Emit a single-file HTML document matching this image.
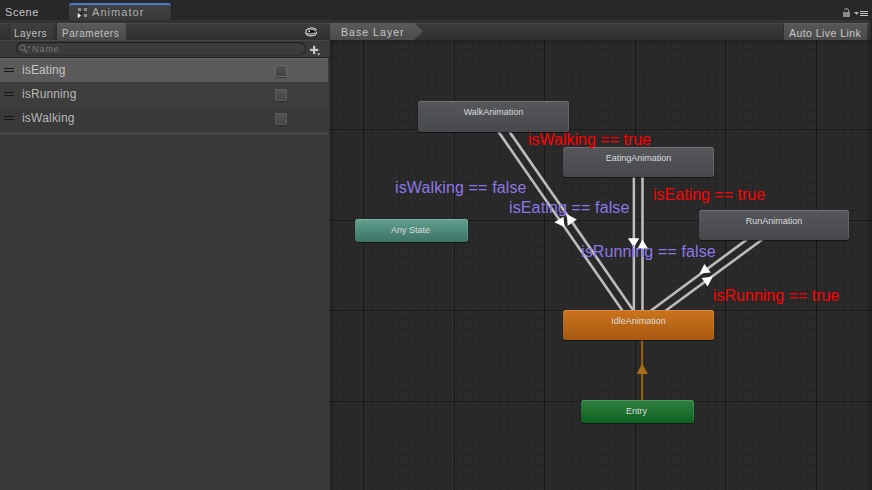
<!DOCTYPE html>
<html><head><meta charset="utf-8">
<style>
*{margin:0;padding:0;box-sizing:border-box}
html,body{width:872px;height:490px;overflow:hidden;background:#282828;font-family:"Liberation Sans",sans-serif}
.abs{position:absolute}
.ui{position:absolute;color:#c2c2c2;font-size:11px;white-space:pre;letter-spacing:0.5px;line-height:13px}
.node{position:absolute;border-radius:3px;color:#dcdcdc;font-size:9px;text-align:center;white-space:pre;box-shadow:inset 0 1px 0 rgba(255,255,255,.16),inset -1px 0 0 rgba(255,255,255,.12),0 1px 1px rgba(0,0,0,.55)}
.gray{background:linear-gradient(#55575b,#46484b);width:151px;height:31px;line-height:22px}
.lbl{position:absolute;font-size:16px;white-space:pre;line-height:18px}
.red{color:#ff0000}
.pur{color:#8c78e8;letter-spacing:0.13px}
</style></head><body>
<!-- top tab strip -->
<div class="abs" style="left:0;top:0;width:872px;height:20px;background:#282828"></div>
<div class="ui" style="left:5px;top:6px;letter-spacing:0.55px;color:#c4c4c4">Scene</div>
<div class="abs" style="left:69px;top:3px;width:102px;height:17px;background:linear-gradient(#404040,#3a3a3a);border-top:2px solid #4a7cc8;border-radius:3px 3px 0 0;box-shadow:1px 0 0 #222"></div>
<svg class="abs" style="left:76px;top:6px" width="14" height="14" viewBox="0 0 14 14">
 <rect x="1" y="1" width="5" height="5" fill="#222"/><rect x="1.7" y="1.7" width="3.6" height="3.6" fill="#8a8a8a"/>
 <rect x="7" y="1" width="5" height="5" fill="#222"/><rect x="7.7" y="1.7" width="3.6" height="3.6" fill="#8a8a8a"/>
 <rect x="7" y="7" width="5" height="5" fill="#222"/><rect x="7.7" y="7.7" width="3.6" height="3.6" fill="#8a8a8a"/>
 <path d="M6.5 6 L3.5 9.5" stroke="#222" stroke-width="1.2"/>
 <path d="M1.8 7 L1.8 12.2 L5 9.6 Z" fill="#fff"/>
</svg>
<div class="ui" style="left:92px;top:6px;letter-spacing:1.05px;color:#b0b0b0">Animator</div>
<svg class="abs" style="left:842px;top:7px" width="30" height="12" viewBox="0 0 30 12">
 <path d="M2.4 3 A2.2 2.2 0 0 1 6.6 3.4 L6.6 5.2" stroke="#8a8a8a" stroke-width="1.2" fill="none"/>
 <rect x="1" y="5" width="7" height="5" fill="#8a8a8a"/>
 <path d="M12 5 L17 5 L14.5 8 Z" fill="#b0b0b0"/>
 <rect x="18" y="4" width="8" height="1" fill="#c4c4c4"/><rect x="18" y="6" width="8" height="1" fill="#c4c4c4"/><rect x="18" y="8" width="8" height="1" fill="#c4c4c4"/>
</svg>

<!-- left panel -->
<div class="abs" style="left:0;top:20px;width:330px;height:470px;background:#383838"></div>
<div class="abs" style="left:0;top:20px;width:872px;height:20px;background:linear-gradient(#333 0,#333 3px,#474747 3px,#474747 4px,#3b3b3b 4px,#303030 100%)"></div>
<div class="abs" style="left:9px;top:23px;width:46px;height:17px;border-left:1px solid #2c2c2c;border-right:1px solid #2c2c2c;background:linear-gradient(#3e3e3e,#363636)"></div>
<div class="ui" style="left:14px;top:26.5px;font-size:10px;letter-spacing:0.5px">Layers</div>
<div class="abs" style="left:56px;top:23px;width:70px;height:17px;border-left:1px solid #2c2c2c;background:linear-gradient(#5a5a5a,#4a4a4a);box-shadow:inset 0 1px 0 #626262"></div>
<div class="ui" style="left:62px;top:26.5px;font-size:10px;letter-spacing:0.55px">Parameters</div>
<svg class="abs" style="left:302px;top:24px" width="18" height="15" viewBox="0 0 18 15">
 <g fill="none" stroke="#d6d6d6" stroke-linecap="round">
  <path d="M4 6.5 Q9 1.6 14.2 5.6" stroke-width="1.1"/>
  <path d="M4.6 7.6 Q9 3.6 13.6 6.6" stroke-width="0.9"/>
  <path d="M3.6 8 Q3.4 11.6 9 11.9 Q14.6 11.6 14.6 8" stroke-width="1.1"/>
  <path d="M5.2 9.6 Q9 10.8 13 9.3" stroke-width="0.9"/>
 </g>
 <path d="M5.2 6.3 Q8.5 5.4 11.4 6.2 L11.6 8 Q8.2 8.9 5.4 8.1 Z" fill="#050505"/>
 <circle cx="7.3" cy="7.2" r="0.85" fill="#f4f4f4"/>
</svg>

<!-- search row -->
<div class="abs" style="left:0;top:40px;width:330px;height:17px;background:#3a3a3a;border-top:1px solid #474747"></div>
<div class="abs" style="left:0;top:57px;width:330px;height:1px;background:#222"></div>
<div class="abs" style="left:16px;top:42px;width:290px;height:13px;border-radius:7px;background:#3c3c3c;box-shadow:inset 0 1px 0 #1c1c1c,inset 1px 0 1px #262626,inset -1px 0 1px #262626,0 1px 0 #333"></div>
<svg class="abs" style="left:18px;top:43px" width="14" height="12" viewBox="0 0 14 12">
 <circle cx="4.5" cy="4.7" r="2.6" fill="none" stroke="#777" stroke-width="1"/>
 <path d="M6.4 6.6 L9.3 9.6" stroke="#777" stroke-width="1.1"/>
 <path d="M9.2 3.6 L12.4 3.6 L10.8 5.8 Z" fill="#777"/>
</svg>
<div class="ui" style="left:32px;top:44px;font-size:9px;letter-spacing:0.95px;color:#767676;line-height:10px">Name</div>
<svg class="abs" style="left:308px;top:44px" width="14" height="13" viewBox="0 0 14 13">
 <rect x="5" y="1.8" width="2.2" height="8.2" fill="#c8c8c8"/>
 <rect x="1.9" y="4.8" width="8.4" height="2.2" fill="#c8c8c8"/>
 <path d="M9.2 9.2 L12.3 9.2 L10.75 11.8 Z" fill="#c0c0c0"/>
</svg>

<!-- rows -->
<div class="abs" style="left:0;top:58px;width:328px;height:24px;background:#5a5a5a;box-shadow:inset 0 1px 0 #636363"></div>
<div class="abs" style="left:0;top:82px;width:328px;height:1px;background:#3a3a3a"></div>
<div class="abs" style="left:0;top:83px;width:328px;height:25px;background:#3d3d3d"></div>
<div class="abs" style="left:0;top:108px;width:328px;height:24px;background:#393939"></div>
<div class="abs" style="left:0;top:132px;width:328px;height:3px;background:#474747;border-radius:2px"></div>
<div class="abs" style="left:4px;top:68px;width:10px;height:1.3px;background:#161616"></div>
<div class="abs" style="left:4px;top:71px;width:10px;height:1.3px;background:#161616"></div>
<div class="abs" style="left:4px;top:92px;width:10px;height:1.3px;background:#161616"></div>
<div class="abs" style="left:4px;top:95px;width:10px;height:1.3px;background:#161616"></div>
<div class="abs" style="left:4px;top:116px;width:10px;height:1.3px;background:#161616"></div>
<div class="abs" style="left:4px;top:119px;width:10px;height:1.3px;background:#161616"></div>
<div class="ui" style="left:22px;top:64px;font-size:12px;letter-spacing:0.12px;color:#c4c4c4">isEating</div>
<div class="ui" style="left:22px;top:88px;font-size:12px;letter-spacing:0.12px;color:#b8b8b8">isRunning</div>
<div class="ui" style="left:22px;top:112px;font-size:12px;letter-spacing:0.2px;color:#b8b8b8">isWalking</div>
<div class="abs" style="left:275px;top:65px;width:12px;height:12px;border-radius:2px;background:linear-gradient(#525252,#404040);box-shadow:inset 0 0 0 1px #676767,inset 0 1px 0 #747474,0 1px 0 #383838"></div>
<div class="abs" style="left:275px;top:89px;width:12px;height:12px;border-radius:2px;background:linear-gradient(#555,#454545);box-shadow:inset 0 0 0 1px #5c5c5c,inset 0 1px 0 #6e6e6e,0 1px 0 #2a2a2a"></div>
<div class="abs" style="left:275px;top:113px;width:12px;height:12px;border-radius:2px;background:linear-gradient(#555,#454545);box-shadow:inset 0 0 0 1px #5c5c5c,inset 0 1px 0 #6e6e6e,0 1px 0 #2a2a2a"></div>



<!-- graph -->
<div class="abs" style="left:330px;top:40px;width:542px;height:450px;background:#2a2a2a"></div>
<svg class="abs" style="left:330px;top:40px" width="542" height="450" shape-rendering="crispEdges"><rect x="6" y="0" width="1" height="450" fill="#252525"/><rect x="15" y="0" width="1" height="450" fill="#252525"/><rect x="24" y="0" width="1" height="450" fill="#252525"/><rect x="42" y="0" width="1" height="450" fill="#252525"/><rect x="51" y="0" width="1" height="450" fill="#252525"/><rect x="60" y="0" width="1" height="450" fill="#252525"/><rect x="69" y="0" width="1" height="450" fill="#252525"/><rect x="78" y="0" width="1" height="450" fill="#252525"/><rect x="87" y="0" width="1" height="450" fill="#252525"/><rect x="97" y="0" width="1" height="450" fill="#252525"/><rect x="106" y="0" width="1" height="450" fill="#252525"/><rect x="115" y="0" width="1" height="450" fill="#252525"/><rect x="133" y="0" width="1" height="450" fill="#252525"/><rect x="142" y="0" width="1" height="450" fill="#252525"/><rect x="151" y="0" width="1" height="450" fill="#252525"/><rect x="160" y="0" width="1" height="450" fill="#252525"/><rect x="169" y="0" width="1" height="450" fill="#252525"/><rect x="178" y="0" width="1" height="450" fill="#252525"/><rect x="187" y="0" width="1" height="450" fill="#252525"/><rect x="196" y="0" width="1" height="450" fill="#252525"/><rect x="205" y="0" width="1" height="450" fill="#252525"/><rect x="223" y="0" width="1" height="450" fill="#252525"/><rect x="232" y="0" width="1" height="450" fill="#252525"/><rect x="241" y="0" width="1" height="450" fill="#252525"/><rect x="250" y="0" width="1" height="450" fill="#252525"/><rect x="259" y="0" width="1" height="450" fill="#252525"/><rect x="268" y="0" width="1" height="450" fill="#252525"/><rect x="278" y="0" width="1" height="450" fill="#252525"/><rect x="287" y="0" width="1" height="450" fill="#252525"/><rect x="296" y="0" width="1" height="450" fill="#252525"/><rect x="314" y="0" width="1" height="450" fill="#252525"/><rect x="323" y="0" width="1" height="450" fill="#252525"/><rect x="332" y="0" width="1" height="450" fill="#252525"/><rect x="341" y="0" width="1" height="450" fill="#252525"/><rect x="350" y="0" width="1" height="450" fill="#252525"/><rect x="359" y="0" width="1" height="450" fill="#252525"/><rect x="368" y="0" width="1" height="450" fill="#252525"/><rect x="377" y="0" width="1" height="450" fill="#252525"/><rect x="386" y="0" width="1" height="450" fill="#252525"/><rect x="404" y="0" width="1" height="450" fill="#252525"/><rect x="413" y="0" width="1" height="450" fill="#252525"/><rect x="422" y="0" width="1" height="450" fill="#252525"/><rect x="431" y="0" width="1" height="450" fill="#252525"/><rect x="440" y="0" width="1" height="450" fill="#252525"/><rect x="449" y="0" width="1" height="450" fill="#252525"/><rect x="459" y="0" width="1" height="450" fill="#252525"/><rect x="468" y="0" width="1" height="450" fill="#252525"/><rect x="477" y="0" width="1" height="450" fill="#252525"/><rect x="495" y="0" width="1" height="450" fill="#252525"/><rect x="504" y="0" width="1" height="450" fill="#252525"/><rect x="513" y="0" width="1" height="450" fill="#252525"/><rect x="522" y="0" width="1" height="450" fill="#252525"/><rect x="531" y="0" width="1" height="450" fill="#252525"/><rect x="540" y="0" width="1" height="450" fill="#252525"/><rect x="0" y="8" width="542" height="1" fill="#252525"/><rect x="0" y="17" width="542" height="1" fill="#252525"/><rect x="0" y="26" width="542" height="1" fill="#252525"/><rect x="0" y="35" width="542" height="1" fill="#252525"/><rect x="0" y="44" width="542" height="1" fill="#252525"/><rect x="0" y="53" width="542" height="1" fill="#252525"/><rect x="0" y="62" width="542" height="1" fill="#252525"/><rect x="0" y="71" width="542" height="1" fill="#252525"/><rect x="0" y="80" width="542" height="1" fill="#252525"/><rect x="0" y="98" width="542" height="1" fill="#252525"/><rect x="0" y="107" width="542" height="1" fill="#252525"/><rect x="0" y="116" width="542" height="1" fill="#252525"/><rect x="0" y="125" width="542" height="1" fill="#252525"/><rect x="0" y="134" width="542" height="1" fill="#252525"/><rect x="0" y="143" width="542" height="1" fill="#252525"/><rect x="0" y="152" width="542" height="1" fill="#252525"/><rect x="0" y="161" width="542" height="1" fill="#252525"/><rect x="0" y="170" width="542" height="1" fill="#252525"/><rect x="0" y="189" width="542" height="1" fill="#252525"/><rect x="0" y="198" width="542" height="1" fill="#252525"/><rect x="0" y="207" width="542" height="1" fill="#252525"/><rect x="0" y="216" width="542" height="1" fill="#252525"/><rect x="0" y="225" width="542" height="1" fill="#252525"/><rect x="0" y="234" width="542" height="1" fill="#252525"/><rect x="0" y="243" width="542" height="1" fill="#252525"/><rect x="0" y="252" width="542" height="1" fill="#252525"/><rect x="0" y="261" width="542" height="1" fill="#252525"/><rect x="0" y="279" width="542" height="1" fill="#252525"/><rect x="0" y="288" width="542" height="1" fill="#252525"/><rect x="0" y="297" width="542" height="1" fill="#252525"/><rect x="0" y="306" width="542" height="1" fill="#252525"/><rect x="0" y="315" width="542" height="1" fill="#252525"/><rect x="0" y="324" width="542" height="1" fill="#252525"/><rect x="0" y="333" width="542" height="1" fill="#252525"/><rect x="0" y="342" width="542" height="1" fill="#252525"/><rect x="0" y="351" width="542" height="1" fill="#252525"/><rect x="0" y="370" width="542" height="1" fill="#252525"/><rect x="0" y="379" width="542" height="1" fill="#252525"/><rect x="0" y="388" width="542" height="1" fill="#252525"/><rect x="0" y="397" width="542" height="1" fill="#252525"/><rect x="0" y="406" width="542" height="1" fill="#252525"/><rect x="0" y="415" width="542" height="1" fill="#252525"/><rect x="0" y="424" width="542" height="1" fill="#252525"/><rect x="0" y="433" width="542" height="1" fill="#252525"/><rect x="0" y="442" width="542" height="1" fill="#252525"/><rect x="33" y="0" width="1" height="450" fill="#1a1a1a"/><rect x="124" y="0" width="1" height="450" fill="#1a1a1a"/><rect x="214" y="0" width="1" height="450" fill="#1a1a1a"/><rect x="305" y="0" width="1" height="450" fill="#1a1a1a"/><rect x="395" y="0" width="1" height="450" fill="#1a1a1a"/><rect x="486" y="0" width="1" height="450" fill="#1a1a1a"/><rect x="0" y="89" width="542" height="1" fill="#1a1a1a"/><rect x="0" y="180" width="542" height="1" fill="#1a1a1a"/><rect x="0" y="270" width="542" height="1" fill="#1a1a1a"/><rect x="0" y="361" width="542" height="1" fill="#1a1a1a"/></svg>
<div class="abs" style="left:330px;top:40px;width:542px;height:6px;background:linear-gradient(rgba(0,0,0,.2),rgba(0,0,0,0))"></div>
<div class="abs" style="left:330px;top:40px;width:6px;height:450px;background:linear-gradient(90deg,rgba(0,0,0,.2),rgba(0,0,0,0))"></div>
<div class="abs" style="left:866px;top:40px;width:6px;height:450px;background:linear-gradient(270deg,rgba(0,0,0,.22),rgba(0,0,0,0))"></div>

<!-- transitions -->
<svg class="abs" style="left:0;top:0" width="872" height="490">
 <g stroke="#bcbcbc" stroke-width="2.6" fill="none">
  <line x1="487.9" y1="116.5" x2="632.4" y2="325"/>
  <line x1="498.9" y1="116.5" x2="643.4" y2="325"/>
  <line x1="633.9" y1="162" x2="633.9" y2="325"/>
  <line x1="642.5" y1="162" x2="642.5" y2="325"/>
  <line x1="766.6" y1="225" x2="631.4" y2="325"/>
  <line x1="782" y1="225" x2="646.2" y2="325"/>
 </g>
 <line x1="642.1" y1="340" x2="642.1" y2="400" stroke="#8c5c12" stroke-width="2.3"/>
 <path d="M642.1 363.6 L636.7 373.9 L647.9 373.9 Z" fill="#a66e16"/>
 <g fill="#ffffff">
  <path d="M554.3 222.3 L563.5 216.7 L564.4 227.1 Z"/>
  <path d="M576.9 219.4 L566.8 214.3 L567.7 225.7 Z"/>
  <path d="M627.8 238.3 L639.3 238.3 L633.9 247.2 Z"/>
  <path d="M642.4 239.6 L637.5 248.8 L648 248.6 Z"/>
  <path d="M704.4 263.9 L699.6 273.6 L710.75 272.6 Z"/>
  <path d="M707.6 286.5 L701.7 278.1 L712.8 276.4 Z"/>
 </g>
</svg>

<!-- nodes -->
<div class="node gray" style="left:418px;top:101px">WalkAnimation</div>
<div class="node gray" style="left:563px;top:147px;height:30px">EatingAnimation</div>
<div class="node gray" style="left:699px;top:210px;width:150px;height:30px">RunAnimation</div>
<div class="node" style="left:355px;top:219px;width:113px;height:23px;line-height:23px;padding-right:2px;background:linear-gradient(#62a18f,#3b7265)">Any State</div>
<div class="node" style="left:563px;top:310px;width:151px;height:30px;line-height:22px;background:linear-gradient(#cb741e,#a75910)">IdleAnimation</div>
<div class="node" style="left:581px;top:400px;width:113px;height:23px;line-height:22px;padding-right:2px;background:linear-gradient(#2f803f,#0d6220)">Entry</div>

<!-- labels -->
<div class="lbl red" style="left:528px;top:131px">isWalking == true</div>
<div class="lbl pur" style="left:395px;top:179px">isWalking == false</div>
<div class="lbl pur" style="left:509px;top:199px">isEating == false</div>
<div class="lbl red" style="left:653px;top:186px">isEating == true</div>
<div class="lbl pur" style="left:581px;top:243px">isRunning == false</div>
<div class="lbl red" style="left:713px;top:287px">isRunning == true</div>

<!-- breadcrumbs -->
<div class="abs" style="left:330px;top:23px;width:93px;height:17px;background:linear-gradient(#5a5a5a,#4b4b4b);clip-path:polygon(0 0,84px 0,93px 50%,84px 100%,0 100%)"></div>
<div class="ui" style="left:341px;top:26px;font-size:10.5px;letter-spacing:1.05px;color:#c8c8c8">Base Layer</div>
<div class="abs" style="left:784px;top:23px;width:83px;height:17px;background:linear-gradient(#585858,#4a4a4a);box-shadow:-1px 0 0 #2e2e2e,inset 0 1px 0 #606060"></div>
<div class="abs" style="left:870px;top:20px;width:2px;height:20px;background:#262626"></div>
<div class="ui" style="left:789px;top:26.5px;font-size:10.5px;letter-spacing:0.45px;color:#c8c8c8">Auto Live Link</div>
</body></html>
